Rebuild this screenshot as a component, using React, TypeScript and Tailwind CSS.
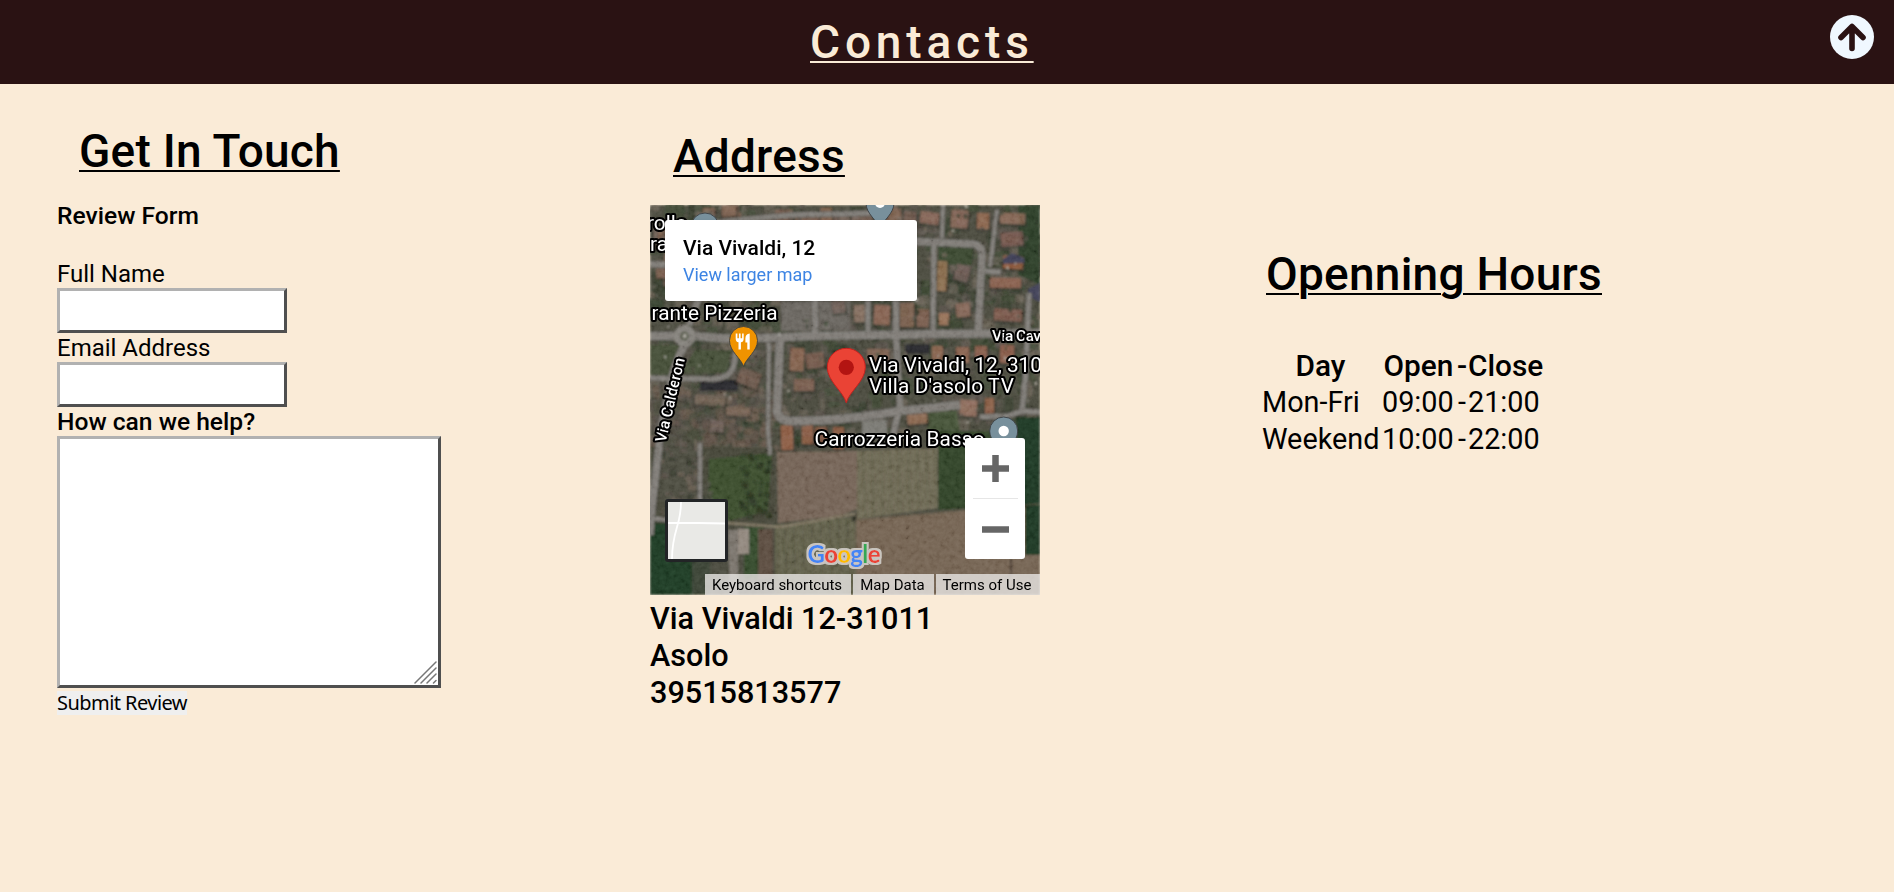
import type { ReactNode } from "react";

type Box = { x: number; y: number; w: number; h: number; a: number; c: string };

function seeded(seed: number) {
  let s = seed;
  return () => {
    s = (s * 1664525 + 1013904223) % 4294967296;
    return s / 4294967296;
  };
}

const roofs = ["#7d5d4e", "#80604f", "#6e574c", "#846a5c", "#75645a", "#8a6450", "#665b54"];
const greens = ["#39452f", "#343f2c", "#424a38", "#4b4b3d", "#30392b"];
const soils = ["#625b50", "#6d645a", "#58514a", "#504c42"];

function scatter(seed: number, n: number, x0: number, y0: number, w: number, h: number, colors: string[], min: number, max: number): Box[] {
  const r = seeded(seed);
  return Array.from({ length: n }, () => ({
    x: x0 + r() * w,
    y: y0 + r() * h,
    w: min + r() * (max - min),
    h: min + r() * (max - min),
    a: r() * 10 - 3,
    c: colors[Math.floor(r() * colors.length)],
  }));
}

const ground: Box[] = [
  ...scatter(7, 340, -5, -5, 395, 240, greens, 5, 20),
  ...scatter(19, 380, -5, -5, 395, 235, soils, 4, 14),
  ...scatter(31, 130, 0, 180, 125, 66, ["#5f5146", "#6a594c", "#434536", "#4f4941"], 5, 16),
];

const houses: Box[] = [
  ...scatter(43, 20, 0, 0, 60, 85, roofs, 9, 17),
  ...scatter(71, 22, 60, 0, 200, 14, roofs, 10, 18),
  { x: 270, y: 7, w: 19, h: 12, a: 8, c: "#8d685a" },
  { x: 301, y: 5, w: 17, h: 18, a: 4, c: "#8a6658" },
  { x: 327, y: 8, w: 12, h: 16, a: 2, c: "#94684f" },
  { x: 350, y: 8, w: 25, h: 11, a: 2, c: "#8c6856" },
  { x: 351, y: 27, w: 22, h: 14, a: -5, c: "#79564e" },
  { x: 353, y: 51, w: 20, h: 13, a: 4, c: "#96593c" },
  { x: 340, y: 73, w: 31, h: 10, a: 1, c: "#8e5f4d" },
  { x: 344, y: 104, w: 28, h: 12, a: 3, c: "#80594c" },
  { x: 287, y: 56, w: 10, h: 30, a: 2, c: "#927050" },
  { x: 305, y: 60, w: 14, h: 16, a: 15, c: "#6e5b56" },
  { x: 289, y: 108, w: 10, h: 12, a: 0, c: "#a4785e" },
  { x: 306, y: 98, w: 14, h: 14, a: -4, c: "#8c695a" },
  { x: 250, y: 98, w: 14, h: 24, a: 0, c: "#80604f" },
  { x: 267, y: 104, w: 12, h: 18, a: 3, c: "#805f50" },
  { x: 224, y: 100, w: 16, h: 20, a: 3, c: "#8e6554" },
  { x: 204, y: 100, w: 13, h: 17, a: -3, c: "#8b7361" },
  { x: 182, y: 96, w: 13, h: 12, a: -8, c: "#6c5b54" },
  { x: 140, y: 143, w: 14, h: 23, a: 3, c: "#8b6350" },
  { x: 156, y: 148, w: 18, h: 15, a: -7, c: "#7a5a4d" },
  { x: 144, y: 174, w: 20, h: 12, a: 0, c: "#7c5e4e" },
  { x: 217, y: 144, w: 22, h: 15, a: 2, c: "#836151" },
  { x: 282, y: 141, w: 11, h: 14, a: 0, c: "#8f644f" },
  { x: 306, y: 142, w: 13, h: 16, a: 0, c: "#916450" },
  { x: 325, y: 141, w: 12, h: 12, a: 0, c: "#8d5b49" },
  { x: 350, y: 140, w: 14, h: 18, a: 2, c: "#8f5a47" },
  { x: 131, y: 220, w: 12, h: 25, a: -2, c: "#965f45" },
  { x: 152, y: 219, w: 11, h: 20, a: 0, c: "#925e44" },
  { x: 165, y: 222, w: 12, h: 18, a: 0, c: "#855640" },
  { x: 183, y: 222, w: 11, h: 22, a: 0, c: "#8f593f" },
  { x: 257, y: 202, w: 20, h: 17, a: -5, c: "#8f6850" },
  { x: 310, y: 195, w: 17, h: 16, a: 4, c: "#97705f" },
  { x: 335, y: 193, w: 9, h: 20, a: 0, c: "#935f46" },
  { x: 88, y: 165, w: 22, h: 16, a: 20, c: "#6c564a" },
  { x: 45, y: 190, w: 30, h: 10, a: 3, c: "#706053" },
  { x: 76, y: 202, w: 24, h: 9, a: 2, c: "#746052" },
  { x: 60, y: 215, w: 14, h: 12, a: 5, c: "#6b5d55" },
];

const roads: { d: string; w: number }[] = [
  { d: "M0 131 L24 131 M45 131 Q80 135 115 133 L160 131 L290 129 L390 128", w: 8 },
  { d: "M36 138 Q28 150 22 172 Q14 205 10 232 L1 312 L0 330", w: 7 },
  { d: "M39 120 L50 90", w: 6 },
  { d: "M87 139 L84 160 Q80 174 62 174 L0 173", w: 5 },
  { d: "M130 134 L127 205 Q127 217 145 216 Q195 216 250 206 L310 200", w: 8 },
  { d: "M119 138 L118 225 L120 250", w: 4 },
  { d: "M165 90 L165 130", w: 6 },
  { d: "M218 96 L218 128", w: 5 },
  { d: "M246 96 L246 130 L250 200 L242 235", w: 6 },
  { d: "M284 35 L283 130", w: 5 },
  { d: "M258 36 L322 39 Q333 40 332 51 L328 130", w: 7 },
  { d: "M334 66 L351 67", w: 5 },
  { d: "M347 5 L340 62", w: 4 },
  { d: "M293 0 L292 33", w: 4 },
  { d: "M0 59 L18 60", w: 6 },
  { d: "M60 18 L140 10 L225 8", w: 5 },
  { d: "M379 88 L376 165 L372 208 M330 212 L358 211 L372 206 L390 207", w: 5 },
  { d: "M50 238 L50 296", w: 4 },
  { d: "M0 313 L18 315", w: 4 },
];

function Pin({ x, y, fill, children }: { x: number; y: number; fill: string; children?: ReactNode }) {
  return (
    <g transform={`translate(${x} ${y})`}>
      <path
        d="M0 26 C-2.5 17.5 -14 11 -14 0 A14 14 0 0 1 14 0 C14 11 2.5 17.5 0 26 Z"
        fill={fill}
        stroke="#3c4043"
        strokeWidth="0.9"
      />
      {children}
    </g>
  );
}

function Satellite() {
  return (
    <svg viewBox="0 0 390 390" className="block h-[390px] w-[390px]">
      <defs>
        <filter id="soft" x="0" y="0" width="1" height="1">
          <feGaussianBlur stdDeviation="0.95" />
        </filter>
        <filter id="grain" x="0" y="0" width="1" height="1">
          <feTurbulence type="fractalNoise" baseFrequency="0.2" numOctaves="3" seed="4" />
          <feColorMatrix type="matrix" values="0.9 0.9 0 0 -0.36  0.9 0.9 0 0 -0.36  0.9 0.9 0 0 -0.36  0 0 0 0 1" />
        </filter>
        <filter id="halo" x="-0.1" y="-0.3" width="1.2" height="1.6">
          <feMorphology in="SourceAlpha" operator="dilate" radius="2" result="wide" />
          <feFlood floodColor="#c9c5bf" />
          <feComposite in2="wide" operator="in" result="edge" />
          <feMerge>
            <feMergeNode in="edge" />
            <feMergeNode in="SourceGraphic" />
          </feMerge>
        </filter>
        <pattern id="rows" width="9" height="90" patternUnits="userSpaceOnUse" patternTransform="rotate(-2)">
          <rect width="4" height="90" fill="#8b8468" opacity="0.1" />
          <rect x="5" width="2" height="90" fill="#3d4a31" opacity="0.1" />
        </pattern>
      </defs>
      <g filter="url(#soft)">
        <rect width="390" height="390" fill="#46463a" />
        {ground.map((b, i) => (
          <rect key={i} x={b.x} y={b.y} width={b.w} height={b.h} rx="3" fill={b.c} opacity="0.7" />
        ))}
        <path d="M368 0 H390 V80 L368 70 Z" fill="#2a3b27" />
        <path d="M0 140 H30 L18 172 H0 Z M45 145 H82 L76 168 H30 Z" fill="#424c36" />
        <path d="M288 40 H324 L322 60 H288 Z" fill="#38452f" />
        <path d="M277 200 L305 197 L310 225 L278 235 Z" fill="#434f34" />
        <path d="M131 96 H161 V126 H131 Z M169 96 H200 V125 H169 Z" fill="#66625c" />
        <path d="M50 175 H88 V186 H50 Z M255 139 H280 V149 H255 Z" fill="#28262b" />
        <g opacity="0.85">
          {houses.map((b, i) => (
            <g key={i} transform={`rotate(${b.a} ${b.x + b.w / 2} ${b.y + b.h / 2})`}>
              <rect x={b.x - 1} y={b.y + 2} width={b.w + 3} height={b.h + 1} fill="#2b2b25" opacity="0.55" />
              <rect x={b.x} y={b.y} width={b.w} height={b.h} rx="1" fill={b.c} />
              <path d={`M${b.x} ${b.y + b.h / 2} h${b.w}`} stroke="#a98570" strokeWidth="1" opacity="0.35" />
            </g>
          ))}
          {scatter(129, 170, 0, 0, 390, 225, ["#2c3626", "#3a4531", "#77695c", "#5b544b"], 2, 6).map((b, i) => (
            <ellipse key={i} cx={b.x} cy={b.y} rx={b.w / 2} ry={b.h / 2} fill={b.c} opacity="0.75" />
          ))}
        </g>
        <rect x="212" y="215" width="25" height="19" fill="#77766f" />
        <path d="M353 54 L362 48 L374 53 V58 L353 59 Z M378 84 L390 78 V97 L379 92 Z" fill="#3c3d52" />
        <path d="M0 242 H125 V318 H0 Z" fill="#424336" />
        <path d="M59 254 L122 248 L118 306 L70 318 H57 Z" fill="#37482c" />
        <path d="M12 240 H48 V296 H10 Z" fill="#4a483e" />
        {scatter(83, 65, 10, 232, 48, 80, ["#30362a", "#5a5148", "#4f4b40", "#665c50"], 3, 9).map((b, i) => (
          <rect key={i} x={b.x} y={b.y} width={b.w} height={b.h} rx="2" fill={b.c} opacity="0.7" />
        ))}
        {scatter(97, 45, 90, 246, 30, 66, ["#29321f", "#2e3826"], 3, 7).map((b, i) => (
          <circle key={i} cx={b.x} cy={b.y} r={b.w / 2} fill={b.c} opacity="0.75" />
        ))}
        <path d="M127 247 L207 246 L207 304 L190 311 L128 318 Z" fill="#716152" />
        <path d="M207 246 L288 243 L288 303 L207 314 Z" fill="#68634f" />
        <path d="M207 246 L288 243 L288 303 L207 314 Z" fill="url(#rows)" />
        <path d="M288 226 L352 226 L368 260 V300 L288 305 Z" fill="#2f4127" />
        <path d="M206 314 L390 299 V390 H206 Z" fill="#716150" />
        <path d="M125 320 L206 312 V390 H125 Z" fill="#5b5a45" />
        <path d="M125 320 L206 312 V390 H125 Z" fill="url(#rows)" />
        <path d="M366 212 H390 V350 H375 V300 H366 Z" fill="#1a3621" />
        <path d="M0 318 H49 V390 H0 Z" fill="#1f3823" />
        <path d="M42 355 H60 V390 H42 Z" fill="#393f30" />
        <path d="M94 322 H114 V374 H94 Z" fill="#33472a" />
        <path d="M108 324 H123 V374 H108 Z" fill="#59493c" />
        <path d="M78 325 H88 V390 H80 Z" fill="#777169" />
        <path d="M88 324 H99 V349 H88 Z" fill="#8e847a" />
        <path d="M77 318 L130 322 L205 309" fill="none" stroke="#7b725e" strokeWidth="2.4" />
        <path d="M206 306 V390 M206 315 L390 299" stroke="#574e3e" strokeWidth="1" fill="none" />
        <circle cx="204" cy="314" r="2.5" fill="#2b2920" />
        <path d="M361 354 V370 L355 374" stroke="#3a3226" strokeWidth="1.5" fill="none" />
        {roads.map((r, i) => (
          <path key={i} d={r.d} fill="none" stroke="#45433c" strokeWidth={r.w + 2} opacity="0.6" />
        ))}
        {roads.map((r, i) => (
          <path key={i} d={r.d} fill="none" stroke="#7b7873" strokeWidth={r.w} />
        ))}
        <circle cx="34.5" cy="131" r="11" fill="#807d77" />
        <circle cx="34.5" cy="131" r="4.5" fill="#55584a" />
        <circle cx="34.5" cy="131" r="2" fill="#aaa79f" />
        {scatter(111, 45, 0, 0, 385, 225, ["#bdb6ab", "#a8a39a", "#dad4cc"], 1, 3).map((b, i) => (
          <rect key={i} x={b.x} y={b.y} width={b.w} height={b.h} fill={b.c} opacity="0.8" />
        ))}
      </g>
      <rect width="390" height="390" filter="url(#grain)" opacity="0.28" className="mix-blend-soft-light" />

      <Pin x={55} y={22} fill="#78909c" />
      <Pin x={230} y={-2} fill="#78909c">
        <circle r="5" fill="#fff" />
      </Pin>
      <Pin x={353.7} y={226} fill="#78909c">
        <circle r="5.2" fill="#fff" />
      </Pin>
      <Pin x={93.5} y={135.5} fill="#f09300">
        <path
          d="M-7.8 -7 V-2 Q-7.8 1.5 -5 1.8 V9 H-2.6 V1.8 Q.2 1.5 .2 -2 V-7 H-1.4 V-2.2 H-2.9 V-7 H-4.6 V-2.2 H-6.1 V-7 Z M6.2 -7 Q1.9 -6.5 1.9 -2 V2 H3.8 V9 H6.2 Z"
          fill="#fff"
        />
      </Pin>
      <g
        fill="#fff"
        stroke="#000"
        strokeLinejoin="round"
        strokeWidth="4.2"
        className="font-['Roboto',sans-serif] text-[20.8px] [paint-order:stroke]"
      >
        <text x="-3" y="25">rolle</text>
        <text x="0" y="46">ra</text>
        <text x="1.5" y="115" textLength="126">rante Pizzeria</text>
        <text x="219" y="166.5" textLength="173">Via Vivaldi, 12, 310</text>
        <text x="219" y="188" textLength="145">Villa D'asolo TV</text>
        <text x="164.5" y="241" textLength="170">Carrozzeria Basso</text>
        <g className="text-[15.4px] font-medium">
          <text x="342" y="136" textLength="49">Via Cav</text>
          <text transform="translate(15.5 238) rotate(-77)" textLength="86">Via Calderon</text>
        </g>
      </g>
      <g transform="translate(196.3 162.3)">
        <path
          d="M0 35.5 C-3 24 -19 14 -19 0 A19 19 0 0 1 19 0 C19 14 3 24 0 35.5 Z"
          fill="#ea4335"
          stroke="#c5221f"
          strokeWidth="1"
        />
        <circle r="7.6" fill="#b31412" />
      </g>
      <text x="157.5" y="358" textLength="73" filter="url(#halo)" className="font-['Lato',sans-serif] text-[24px] font-bold">
        <tspan fill="#4285f4">G</tspan>
        <tspan fill="#ea4335">o</tspan>
        <tspan fill="#fbbc04">o</tspan>
        <tspan fill="#4285f4">g</tspan>
        <tspan fill="#34a853">l</tspan>
        <tspan fill="#ea4335">e</tspan>
      </text>
    </svg>
  );
}

function MapCard() {
  return (
    <div className="relative h-[390px] w-[390px] overflow-hidden">
      <Satellite />
      <div className="absolute left-[15px] top-[15px] h-[81px] w-[252px] rounded-[3px] bg-white pl-[18px] pt-[15px] shadow-sm">
        <p className="text-[21px] font-medium leading-[26px]">Via Vivaldi, 12</p>
        <a className="block text-[18px] leading-[27px] text-[#3d84e3]">View larger map</a>
      </div>
      <div className="absolute left-[315px] top-[233px] flex h-[121px] w-[60px] flex-col items-center rounded-[3px] bg-white">
        <svg viewBox="0 0 60 60" className="h-[60px] w-[60px]">
          <path d="M17 30.5 H44 M30.5 17 V44" stroke="#666" strokeWidth="6.5" />
        </svg>
        <div className="h-px w-[45px] bg-[#e6e6e6]" />
        <svg viewBox="0 0 60 60" className="h-[60px] w-[60px]">
          <path d="M17 30.5 H44" stroke="#666" strokeWidth="6.5" />
        </svg>
      </div>
      <div className="absolute left-[15px] top-[294px] h-[63px] w-[63px] rounded-[3px] border-[3px] border-[#222426] bg-[#e9e9e6]">
        <svg viewBox="0 0 57 57" className="h-[57px] w-[57px]">
          <path d="M0 21 H30 L57 21.5 M13 0 Q13 12 9 25 Q4 42 4 57" fill="none" stroke="#fff" strokeWidth="1.8" />
        </svg>
      </div>
      <div className="absolute bottom-0 right-0 flex h-[21px] gap-[2px] text-[15px] leading-[23px] text-black">
        <span className="w-[146px] bg-[#e9e6e3]/80 pr-[2px] text-center">Keyboard shortcuts</span>
        <span className="w-[81px] bg-[#e9e6e3]/80 pr-[2px] text-center">Map Data</span>
        <span className="w-[104px] bg-[#e9e6e3]/80 pr-[2px] text-center">Terms of Use</span>
      </div>
    </div>
  );
}

const inset =
  "block border-[3px] border-t-[#b1b1b1] border-l-[#b1b1b1] border-r-[#4f4f4f] border-b-[#4f4f4f] bg-white outline-none";
const heading =
  "text-[46px] font-medium leading-[53px] tracking-[0.25px] underline decoration-2 underline-offset-[3px]";

export default function App() {
  return (
    <div className="h-[892px] w-full overflow-hidden bg-[#faebd7] font-['Roboto',sans-serif] text-black">
      <header className="flex h-[84px] items-start justify-between bg-[#2a1213] pl-[810px] pr-5">
        <h1 className="mt-4 text-[46px] font-medium leading-[53px] tracking-[4.85px] text-[#faebd7] underline decoration-2 underline-offset-[3px]">
          Contacts
        </h1>
        <button className="mt-[15px]" aria-label="Back to top">
          <svg viewBox="0 0 44 44" className="h-11 w-11">
            <circle cx="22" cy="22" r="22" fill="#f0f8ff" />
            <path
              d="M11 22.5 L22 11.5 L33 22.5 M22 12 V33.5"
              fill="none"
              stroke="#2a1213"
              strokeWidth="5.6"
              strokeLinecap="round"
              strokeLinejoin="round"
            />
          </svg>
        </button>
      </header>
      <main className="flex pl-[57px]">
        <section className="w-[593px] pt-[41px]">
          <h2 className={heading + " pl-[22px]"}>Get In Touch</h2>
          <form className="mt-6 flex flex-col items-start text-[24px] leading-[28px]">
            <p className="mb-[30px] text-[24.6px] font-medium">Review Form</p>
            <label htmlFor="name">Full Name</label>
            <input id="name" className={inset + " mb-px h-[45px] w-[230px]"} />
            <label htmlFor="email">Email Address</label>
            <input id="email" className={inset + " mb-px h-[45px] w-[230px]"} />
            <label htmlFor="help" className="text-[24.6px] font-medium">How can we help?</label>
            <div className="relative">
              <textarea id="help" className={inset + " h-[252px] w-[384px] resize-none"} />
              <svg viewBox="0 0 24 24" className="absolute bottom-[3px] right-[3px] h-6 w-6">
                <path
                  d="M1 22 L22 1 M7 22 L22 7 M13 22 L22 13 M19.5 22 L22 19.5"
                  stroke="#777"
                  strokeWidth="1.5"
                  strokeLinecap="round"
                />
              </svg>
            </div>
            <button
              type="button"
              className="mt-[3px] h-6 w-[130px] whitespace-nowrap bg-[#efefef] font-['Noto_Sans',sans-serif] text-[20px] leading-6 tracking-[-0.55px]"
            >
              Submit Review
            </button>
          </form>
        </section>
        <section className="w-[612px] pt-[46px]">
          <h2 className={heading + " pl-[23px]"}>Address</h2>
          <div className="mt-[22px]">
            <MapCard />
          </div>
          <address className="mt-[5px] text-[30.6px] font-medium not-italic leading-[37px]">
            Via Vivaldi 12-31011
            <br />
            Asolo
            <br />
            39515813577
          </address>
        </section>
        <section className="pt-[164px]">
          <h2 className={heading + " pl-1"}>Openning Hours</h2>
          <table className="mt-[46px] table-fixed border-collapse whitespace-nowrap text-[28.8px] leading-[37px]">
            <colgroup>
              <col className="w-[120px]" />
              <col className="w-[74px]" />
              <col className="w-[12px]" />
              <col className="w-[77px]" />
            </colgroup>
            <thead>
              <tr className="text-[29.8px]">
                <th className="py-0 pl-0 pr-[3px] text-center font-medium">Day</th>
                <th className="py-0 pl-0 pr-px text-center font-medium">Open</th>
                <th className="p-0 text-center font-medium">-</th>
                <th className="p-0 text-left font-medium">Close</th>
              </tr>
            </thead>
            <tbody>
              <tr>
                <td className="p-0">Mon-Fri</td>
                <td className="p-0">09:00</td>
                <td className="p-0 text-center">-</td>
                <td className="p-0">21:00</td>
              </tr>
              <tr>
                <td className="p-0">Weekend</td>
                <td className="p-0">10:00</td>
                <td className="p-0 text-center">-</td>
                <td className="p-0">22:00</td>
              </tr>
            </tbody>
          </table>
        </section>
      </main>
    </div>
  );
}
